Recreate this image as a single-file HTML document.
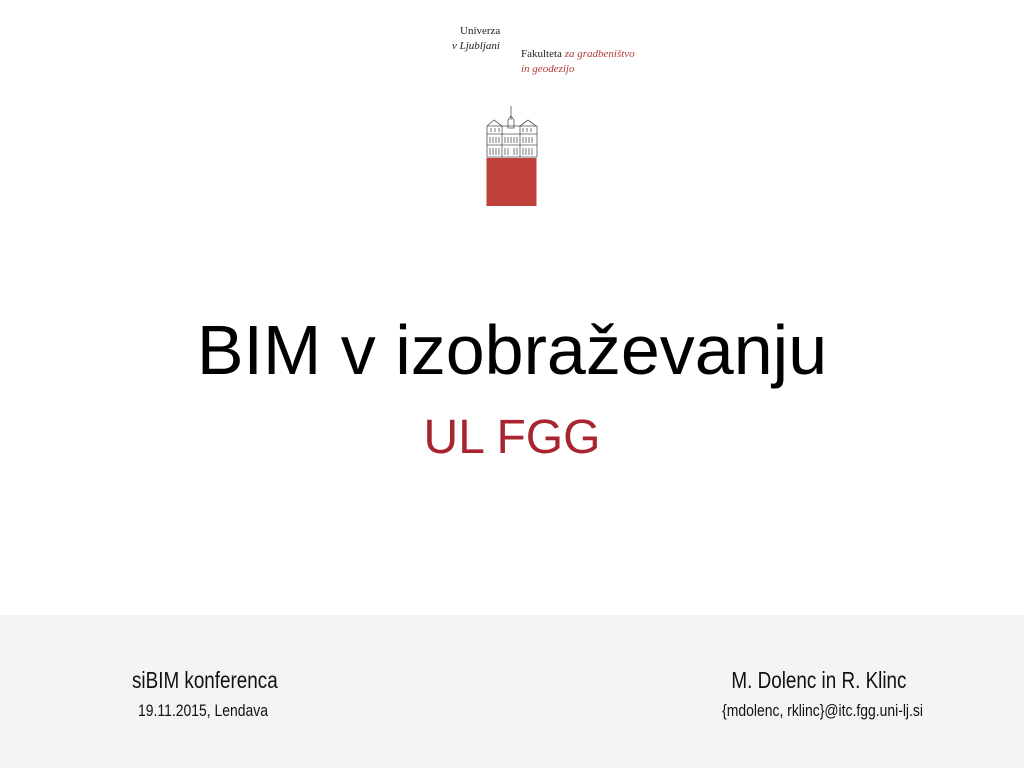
<!DOCTYPE html>
<html><head><meta charset="utf-8"><style>
html,body{margin:0;padding:0;width:1024px;height:768px;background:#fff;overflow:hidden;font-family:"Liberation Sans",sans-serif;}
.abs{position:absolute;white-space:nowrap;}
.serif{font-family:"Liberation Serif",serif;font-size:11px;color:#222;}
.red{color:#a8242f;}
.foot{position:absolute;left:0;top:615px;width:1024px;height:153px;background:#f4f4f4;}
.c{transform-origin:left top;transform:scaleX(0.82);}
.cr{transform-origin:right top;transform:scaleX(0.82);}
</style></head><body>
<div class="abs serif" style="left:460px;top:25px;">Univerza</div>
<div class="abs serif" style="left:452px;top:40px;font-style:italic;">v Ljubljani</div>
<div class="abs serif" style="left:521px;top:48px;">Fakulteta <i class="red" style="color:#b03a3a">za gradbeništvo</i></div>
<div class="abs serif" style="left:521px;top:63px;font-style:italic;color:#b03a3a">in geodezijo</div>
<svg class="abs" style="left:484px;top:104px" width="56" height="104" viewBox="0 0 56 104">
<g stroke="#555" stroke-width="0.8" fill="none">
<line x1="27" y1="2" x2="27" y2="16"/>
<path d="M24 16 L27 12 L30 16 L30 24 L24 24Z"/>
<path d="M3 22 L10 16 L18 22 M36 22 L44 16 L52 22"/>
<rect x="3" y="22" width="50" height="31"/>
<line x1="3" y1="30" x2="53" y2="30"/><line x1="3" y1="41" x2="53" y2="41"/>
<line x1="18" y1="22" x2="18" y2="53"/><line x1="36" y1="22" x2="36" y2="53"/>
<path d="M6 33v6M9 33v6M12 33v6M15 33v6M21 33v6M24 33v6M27 33v6M30 33v6M33 33v6M39 33v6M42 33v6M45 33v6M48 33v6M6 44v7M9 44v7M12 44v7M15 44v7M21 44v7M24 44v7M30 44v7M33 44v7M39 44v7M42 44v7M45 44v7M48 44v7M7 24v4M11 24v4M15 24v4M39 24v4M43 24v4M47 24v4"/>
</g>
<rect x="2.5" y="54" width="50" height="48" fill="#bf3f3a"/>
</svg>
<div class="abs" style="left:0;width:1024px;text-align:center;top:310px;font-size:70px;color:#000;">BIM v izobraževanju</div>
<div class="abs red" style="left:0;width:1024px;text-align:center;top:410px;font-size:48px;">UL FGG</div>
<div class="foot"></div>
<div class="abs c" style="left:132px;top:667px;font-size:23px;color:#111;">siBIM konferenca</div>
<div class="abs c" style="left:138px;top:701px;font-size:17px;color:#111;">19.11.2015, Lendava</div>
<div class="abs cr" style="right:118px;top:667px;font-size:23px;color:#111;">M. Dolenc in R. Klinc</div>
<div class="abs cr" style="right:101px;top:701px;font-size:17px;color:#111;">{mdolenc, rklinc}@itc.fgg.uni-lj.si</div>
</body></html>
